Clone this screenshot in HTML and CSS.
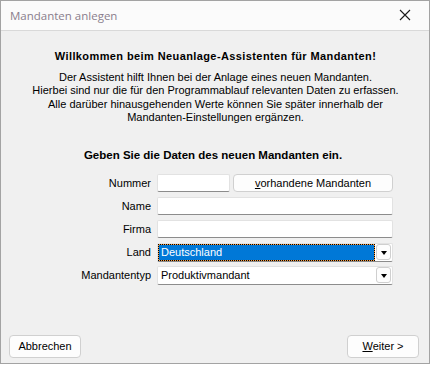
FILE: index.html
```html
<!DOCTYPE html>
<html lang="de">
<head>
    <meta charset="UTF-8">
    <title>Mandanten anlegen</title>
    <link rel="stylesheet" href="styles.css">
</head>
<body>
    <div class="window">
        <div class="titlebar">
            <span class="title">Mandanten anlegen</span>
            <svg class="close" width="12" height="12" viewBox="0 0 12 12">
                <path d="M1 1 L11 11 M11 1 L1 11" stroke="#1a1a1a" stroke-width="1.1" fill="none"/>
            </svg>
        </div>
        <div class="client">
            <h1 class="welcome">Willkommen beim Neuanlage-Assistenten für Mandanten!</h1>
            <p class="intro">
                Der Assistent hilft Ihnen bei der Anlage eines neuen Mandanten.<br>
                Hierbei sind nur die für den Programmablauf relevanten Daten zu erfassen.<br>
                Alle darüber hinausgehenden Werte können Sie später innerhalb der<br>
                Mandanten-Einstellungen ergänzen.
            </p>
            <h2 class="prompt">Geben Sie die Daten des neuen Mandanten ein.</h2>
            <div class="form">
                <label>Nummer</label>
                <div class="row-split">
                    <div class="edit short"></div>
                    <div class="btn small"><u>v</u>orhandene Mandanten</div>
                </div>
                <label>Name</label>
                <div class="edit"></div>
                <label>Firma</label>
                <div class="edit"></div>
                <label>Land</label>
                <div class="combo">
                    <div class="combo-value selected">Deutschland</div>
                    <div class="drop"><span class="arrow"></span></div>
                </div>
                <label>Mandantentyp</label>
                <div class="combo">
                    <div class="combo-value">Produktivmandant</div>
                    <div class="drop"><span class="arrow"></span></div>
                </div>
            </div>
            <div class="footer">
                <div class="btn big">Abbrechen</div>
                <div class="btn big"><u>W</u>eiter &gt;</div>
            </div>
        </div>
    </div>
</body>
</html>
```

FILE: styles.css
```css
*{
    padding: 0;
    margin: 0;
    box-sizing: border-box;
}
body{
    background: #fff;
    font-family: "Liberation Sans", Arial, sans-serif;
    font-size: 11px;
    color: #000;
}
.window{
    width: 430px;
    height: 364px;
    border: 1px solid #a3a3a3;
    display: flex;
    flex-direction: column;
    background: #f0f0f0;
}
.titlebar{
    height: 30px;
    background: #fbfbfb;
    border-bottom: 1px solid #d9d9d9;
    display: flex;
    align-items: center;
    justify-content: space-between;
    padding: 0 18px 1px 9px;
}
.title{
    font-family: "Open Sans", "Noto Sans", sans-serif;
    font-size: 11.5px;
    color: #8a7e8c;
}
.client{
    flex: 1;
    display: flex;
    flex-direction: column;
    padding-top: 19px;
}
.welcome{
    font-size: 11px;
    font-weight: bold;
    letter-spacing: 0.4px;
    line-height: 13px;
    text-align: center;
    padding-left: 1px;
}
.intro{
    margin-top: 8px;
    line-height: 13.4px;
    text-align: center;
    padding-left: 1px;
}
.prompt{
    margin-top: 23px;
    font-size: 11.5px;
    font-weight: bold;
    line-height: 15px;
    text-align: center;
    padding-right: 4px;
}
.form{
    margin-top: 11px;
    display: grid;
    grid-template-columns: 143px 236px;
    grid-auto-rows: 18px;
    column-gap: 6px;
    row-gap: 5px;
    padding-left: 7px;
}
.form label{
    text-align: right;
    line-height: 18px;
}
.row-split{
    display: flex;
    gap: 3px;
}
.edit{
    background: #fff;
    border: 1px solid #e2e2e2;
    border-bottom-color: #8c8c8c;
    border-radius: 2px;
    height: 18px;
}
.short{
    width: 73px;
}
.btn{
    background: #fdfdfd;
    border: 1px solid #d0d0d0;
    border-radius: 4px;
    text-align: center;
}
.small{
    flex: 1;
    line-height: 16px;
}
.combo{
    background: #fff;
    border: 1px solid #e2e2e2;
    border-bottom-color: #8c8c8c;
    border-radius: 2px;
    height: 19px;
    display: flex;
    align-items: center;
    padding: 0 1px 0 1px;
    gap: 2px;
}
.combo-value{
    flex: 1;
    height: 15px;
    line-height: 15px;
    padding-left: 2px;
}
.selected{
    background: #0078d7;
    color: #fff;
    outline: 1px dotted #000;
    outline-offset: 0;
    box-shadow: 0 0 0 1px #ff9d3c;
}
.drop{
    width: 15px;
    height: 16px;
    border: 1px solid #cfcfcf;
    border-radius: 3px;
    background: #fdfdfd;
    display: flex;
    align-items: center;
    justify-content: center;
}
.arrow{
    width: 0;
    height: 0;
    border-left: 3.5px solid transparent;
    border-right: 3.5px solid transparent;
    border-top: 4px solid #000;
    margin-top: 1px;
}
.footer{
    margin-top: auto;
    display: flex;
    justify-content: space-between;
    padding: 0 10px 5px 8px;
}
.big{
    width: 72px;
    height: 23px;
    line-height: 21px;
}
```
